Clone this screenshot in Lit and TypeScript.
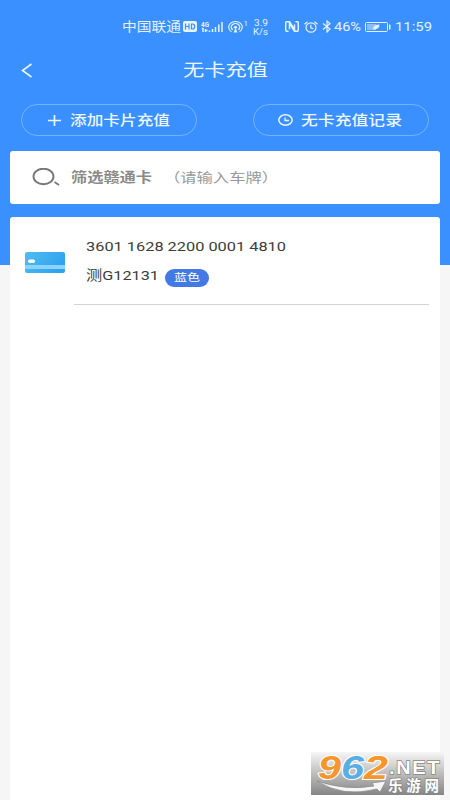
import { LitElement, html, svg, css } from "lit";
import { customElement, property } from "lit/decorators.js";

// one line of text, stretched to a fixed width
@customElement("wide-text")
export class WideText extends LitElement {

    @property() text = "";
    @property({ type: Number }) width = 100;
    @property({ type: Number }) size = 14;

    render() {
        return html`
            <svg width=${this.width} height=${this.size} font-size=${this.size}>
                ${svg`<text x="0" y=${this.size * 0.84} textLength=${this.width} lengthAdjust="spacingAndGlyphs">${this.text}</text>`}
            </svg>
        `
    }

    static styles = css`
        :host {
            display: block;
            flex: none;
        }
        svg {
            display: block;
            overflow: visible;
            fill: currentColor;
        }
    `
}

@customElement("status-bar")
export class StatusBar extends LitElement {

    render() {
        return html`
            <wide-text text="中国联通" width="59" size="13"></wide-text>
            <svg class="hd" width="14" height="11" viewBox="0 0 14 11">
                <rect width="14" height="11" rx="2" fill="#e6f4ff"/>
                <path d="M2.500 2.500v6M6 2.500v6M2.500 5.500H6M8.500 3v5h1q2.200 0 2.200-2.500T9.500 3z" fill="none" stroke="#3b90ff" stroke-width="1.200"/>
            </svg>
            <svg class="signal" width="23" height="14" viewBox="0 0 23 14">
                <text x="0" y="6.500" font-size="7" font-weight="700" textLength="8" lengthAdjust="spacingAndGlyphs" fill="currentColor">4G</text>
                <path d="M2 8v4M1 9l1-1M4.500 9v3M4.500 10.500h2M8.500 10.500v1.500M11.500 9v3M14.500 7v5M17.800 4.500V12M21 2v10" fill="none" stroke="currentColor" stroke-width="1.500"/>
            </svg>
            <svg class="hotspot" width="20" height="14" viewBox="0 0 20 14">
                <g fill="none" stroke="currentColor" stroke-width="1.200">
                    <path d="M3.500 11.800A6.800 5.700 0 1 1 11.500 11.800"/>
                    <path d="M4.800 9.800A4.300 3.500 0 1 1 10.200 9.800"/>
                </g>
                <ellipse cx="7.500" cy="7.300" rx="1.700" ry="1.400" fill="currentColor"/>
                <path d="M7.500 8l2 4.500h-4z" fill="currentColor"/>
                <text x="15.500" y="6" font-size="8" fill="currentColor">1</text>
            </svg>
            <div class="speed">
                <wide-text text="3.9" width="14" size="9"></wide-text>
                <wide-text text="K/s" width="15" size="9"></wide-text>
            </div>
            <svg class="nfc" width="14" height="11" viewBox="0 0 14 11">
                <path d="M3.500 10.300H2Q.7 10.300.7 9V2Q.7.7 2 .7h2.500l5 8V3.500M10.500.7H12q1.300 0 1.300 1.300v7q0 1.300-1.300 1.300H9.500l-5-8v6" fill="none" stroke="currentColor" stroke-width="1.500"/>
            </svg>
            <svg class="alarm" width="14" height="12" viewBox="0 0 14 12">
                <g fill="none" stroke="currentColor" stroke-width="1.200">
                    <ellipse cx="7" cy="6.500" rx="5" ry="4.700"/>
                    <path d="M.5 3.200L3.500.7M13.500 3.200L10.500.7M6.800 3.800v3l2.500 1"/>
                </g>
            </svg>
            <svg class="bluetooth" width="10" height="13" viewBox="0 0 10 13">
                <path d="M1 3.500l7 5.500-3 3V1l3 2.700L1 9.500" fill="none" stroke="currentColor" stroke-width="1.200"/>
            </svg>
            <wide-text text="46%" width="27" size="12.500"></wide-text>
            <svg class="battery" width="26" height="10" viewBox="0 0 26 10">
                <rect x=".5" y=".5" width="22" height="9" rx="1" fill="none" stroke="currentColor"/>
                <rect x="2" y="2" width="9" height="6" fill="#8abfff"/>
                <path d="M8 7.500Q8 2.500 14.500 2.500 14.500 7.500 8 7.500z" fill="currentColor"/>
                <rect x="24" y="2.500" width="1.500" height="5" fill="currentColor"/>
            </svg>
            <wide-text class="time" text="11:59" width="37" size="13"></wide-text>
        `
    }

    static styles = css`
        :host {
            display: flex;
            align-items: center;
            height: 54px;
            padding: 0 0 1px 122px;
            box-sizing: border-box;
            color: #e2f2ff;
        }
        svg { flex: none; }
        .hd { margin-left: 2px; }
        .signal { margin-left: 4px; }
        .hotspot { margin-left: 4px; }
        .speed {
            display: grid;
            justify-items: center;
            margin-left: 5px;
        }
        .nfc { margin-left: 17px; }
        .alarm { margin-left: 5px; }
        .bluetooth { margin: 0 2px 0 4px; }
        .battery { margin-left: 4px; }
        .time { margin-left: 4px; }
    `
}

@customElement("card-row")
export class CardRow extends LitElement {

    @property() number = "";
    @property() plate = "";
    @property() color = "";

    render() {
        return html`
            <svg class="icon" width="40" height="21" viewBox="0 0 40 21">
                <defs>
                    <linearGradient id="face" x1="0" y1="0" x2="1" y2=".4">
                        <stop offset="0" stop-color="#53bdf2"/>
                        <stop offset="1" stop-color="#2fa3ee"/>
                    </linearGradient>
                </defs>
                <rect width="40" height="21" rx="2" fill="url(#face)"/>
                <rect y="13" width="40" height="4" fill="#8bd3fa"/>
                <rect x="3" y="7.500" width="7" height="3.500" rx="1.700" fill="#fff"/>
            </svg>
            <div class="info">
                <wide-text text=${this.number} width="200" size="13.500"></wide-text>
                <div class="line">
                    <wide-text text=${this.plate} width="73" size="13.500"></wide-text>
                    <div class="badge">
                        <wide-text text=${this.color} width="26" size="10.500"></wide-text>
                    </div>
                </div>
            </div>
        `
    }

    static styles = css`
        :host {
            display: flex;
            padding-left: 15px;
            color: #3c3c3c;
        }
        .icon {
            flex: none;
            margin-top: 35px;
        }
        .info {
            flex: 1;
            height: 88px;
            box-sizing: border-box;
            margin: 0 11px 0 9px;
            padding: 23px 0 0 12px;
            border-bottom: 1px solid #d3d3d3;
        }
        .line {
            display: flex;
            align-items: center;
            gap: 6px;
            margin-top: 15px;
            height: 18px;
        }
        .badge {
            display: flex;
            align-items: center;
            justify-content: center;
            width: 44px;
            height: 18px;
            border-radius: 9px;
            background: #4279e4;
            color: #fff;
        }
        .line > wide-text { margin-top: -4px; }
    `
}

@customElement("app-root")
export class AppRoot extends LitElement {

    render() {
        return html`
            <status-bar></status-bar>
            <div class="title">
                <svg class="back" width="12" height="15" viewBox="0 0 12 15">
                    <path d="M10.500 1L1.500 7.500l9 6.500" fill="none" stroke="currentColor" stroke-width="1.600"/>
                </svg>
                <wide-text text="无卡充值" width="85" size="17"></wide-text>
            </div>
            <div class="actions">
                <div class="button add">
                    <svg width="13" height="11" viewBox="0 0 13 11">
                        <path d="M0 5.500h13M6.500 0v11" stroke="currentColor" stroke-width="1.700"/>
                    </svg>
                    <wide-text text="添加卡片充值" width="100" size="14"></wide-text>
                </div>
                <div class="button record">
                    <svg width="15" height="12" viewBox="0 0 15 12">
                        <ellipse cx="7.500" cy="6" rx="6.700" ry="5.200" fill="none" stroke="currentColor" stroke-width="1.500"/>
                        <path d="M7 3.500v3h4" fill="none" stroke="currentColor" stroke-width="1.300"/>
                    </svg>
                    <wide-text text="无卡充值记录" width="101" size="14"></wide-text>
                </div>
            </div>
            <div class="search">
                <svg width="28" height="19" viewBox="0 0 28 19">
                    <ellipse cx="11.500" cy="8.500" rx="10" ry="7.800" fill="none" stroke="#777" stroke-width="1.900"/>
                    <path d="M22.500 14l4.500 3" stroke="#777" stroke-width="1.900"/>
                </svg>
                <wide-text class="name" text="筛选赣通卡" width="81" size="13.500"></wide-text>
                <wide-text class="hint" text="（请输入车牌）" width="114" size="13"></wide-text>
            </div>
            <div class="list">
                <card-row number="3601 1628 2200 0001 4810" plate="测G12131" color="蓝色"></card-row>
            </div>
            <svg class="mark" width="133" height="43" viewBox="0 0 133 43">
                <defs>
                    <linearGradient id="shade" x1="0" y1="0" x2="0" y2="1">
                        <stop offset="0" stop-color="#f6f6f6"/>
                        <stop offset="1" stop-color="#858585"/>
                    </linearGradient>
                </defs>
                <rect width="133" height="43" fill="url(#shade)"/>
                <path d="M6 29Q35 39 63 34L61 31 75 29 69 40 66 37Q32 46 6 29z" fill="#f6f6f6" stroke="#888" stroke-width=".7"/>
                <g class="digits">
                    <text x="7" y="26.500" textLength="23" lengthAdjust="spacingAndGlyphs" fill="#f7962c">9</text>
                    <text x="30" y="26.500" textLength="23" lengthAdjust="spacingAndGlyphs" fill="#5aaee4">6</text>
                    <text x="53" y="26.500" textLength="24" lengthAdjust="spacingAndGlyphs" fill="#f7962c">2</text>
                </g>
                <g class="site">
                    <text x="78" y="21.500" font-size="18" textLength="52" lengthAdjust="spacingAndGlyphs" letter-spacing="1.500">.NET</text>
                    <text x="77" y="38.500" font-size="14.500" textLength="51">乐游网</text>
                </g>
            </svg>
        `
    }

    static styles = css`
        :host {
            display: flex;
            flex-direction: column;
            position: relative;
            height: 800px;
            overflow: hidden;
            background: linear-gradient(#3b90ff 265px, #f6f6f6 265px);
            color: #eaf7ff;
            font-family: Roboto, "Noto Sans CJK SC", sans-serif;
        }
        .title {
            display: grid;
            grid-template-columns: 1fr auto 1fr;
            align-items: center;
            height: 32px;
        }
        .back { margin-left: 21px; }
        .actions {
            display: flex;
            justify-content: space-between;
            margin: 18px 21px 0;
        }
        .button {
            display: flex;
            align-items: center;
            justify-content: center;
            width: 176px;
            height: 32px;
            box-sizing: border-box;
            border: 1px solid #76b3ff;
            border-radius: 16px;
            font-weight: 500;
        }
        .add { gap: 9px; }
        .record {
            gap: 8px;
            padding-right: 2px;
        }
        .search {
            display: flex;
            align-items: center;
            height: 53px;
            margin: 15px 10px 0;
            padding-left: 22px;
            border-radius: 3px;
            background: #fff;
        }
        .name {
            margin-left: 11px;
            color: #8a8a8a;
            font-weight: 700;
        }
        .hint {
            margin-left: 12px;
            color: #999;
        }
        .list {
            flex: 1;
            margin: 13px 10px 0;
            border-radius: 3px 3px 0 0;
            background: #fff;
        }
        .mark {
            position: absolute;
            right: 6px;
            bottom: 5px;
            overflow: visible;
        }
        .digits {
            font: italic 700 33px "Liberation Sans", sans-serif;
            stroke: #fff;
            stroke-width: 2px;
            paint-order: stroke;
        }
        .site {
            font-family: "Liberation Sans", "Noto Sans CJK SC", sans-serif;
            font-weight: 700;
            fill: #fff;
            stroke: #888;
            stroke-width: 1.5px;
            paint-order: stroke;
        }
    `
}
